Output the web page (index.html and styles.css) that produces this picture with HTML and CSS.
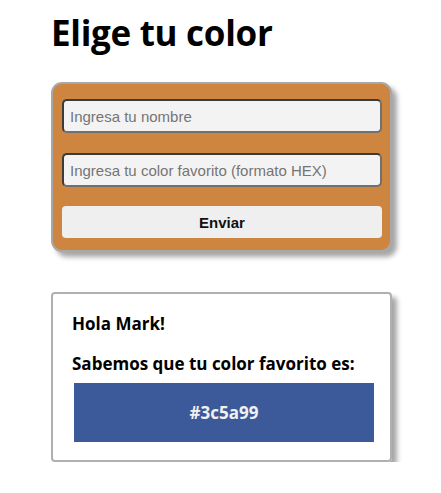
FILE: index.html
```html
<!DOCTYPE html>
<html lang="es">
<head>
<meta charset="utf-8">
<title>Elige tu color</title>
<link rel="stylesheet" href="styles.css">
</head>
<body>
<main class="page">
  <h1 class="title">Elige tu color</h1>
  <form class="form-card">
    <input class="field" type="text" placeholder="Ingresa tu nombre">
    <input class="field" type="text" placeholder="Ingresa tu color favorito (formato HEX)">
    <button class="submit" type="button">Enviar</button>
  </form>
  <section class="result-card">
    <p class="line">Hola Mark!</p>
    <p class="line">Sabemos que tu color favorito es:</p>
    <div class="swatch" style="background-color:#3c5a99">#3c5a99</div>
  </section>
</main>
</body>
</html>
```
FILE: styles.css
```css
html, body {
  margin: 0;
  padding: 0;
  background: #ffffff;
}
body {
  font-family: "Open Sans", "Noto Sans", "DejaVu Sans", sans-serif;
  color: #000;
}
.page {
  width: 341px;
  margin: 0 0 0 51px;
  padding-top: 11px;
  display: flex;
  flex-direction: column;
}
.title {
  font-size: 35px;
  font-weight: 700;
  margin: 0 0 27px 0;
  line-height: 44px;
  letter-spacing: -0.3px;
}
.form-card {
  box-sizing: border-box;
  background: #cd853f;
  border: 2px solid #a8a8a8;
  border-radius: 11px;
  box-shadow: 5px 5px 5px rgba(0, 0, 0, 0.35);
  padding: 15px 8px 12px 9px;
  display: flex;
  flex-direction: column;
  gap: 20px;
}
.field {
  box-sizing: border-box;
  height: 34px;
  width: 100%;
  margin: 0;
  border: 2px solid #3b3b3b;
  border-right-color: #707070;
  border-bottom-color: #707070;
  border-radius: 5px;
  background: #f3f3f3;
  font-family: "Liberation Sans", Arial, sans-serif;
  font-size: 15px;
  padding: 0 6px;
  color: #000;
}
.field::placeholder {
  color: #757575;
}
.submit {
  box-sizing: border-box;
  height: 32px;
  margin-top: -1px;
  width: 100%;
  border: none;
  border-radius: 4px;
  background: #efefef;
  font-family: "Liberation Sans", Arial, sans-serif;
  font-size: 15px;
  font-weight: 700;
  color: #111;
}
.result-card {
  box-sizing: border-box;
  margin-top: 40px;
  border: 2px solid #b0b0b0;
  border-radius: 4px;
  box-shadow: 5px 5px 5px rgba(0, 0, 0, 0.35);
  padding: 19px 18px 18px 19px;
  display: flex;
  flex-direction: column;
}
.line {
  margin: 0 0 18px 0;
  font-size: 17px;
  font-weight: 700;
  line-height: 22px;
}
.line:last-of-type {
  margin-bottom: 8px;
}
.swatch {
  margin-left: 2px;
  width: 300px;
  height: 59px;
  display: flex;
  align-items: center;
  justify-content: center;
  color: #f0f0f0;
  font-size: 17px;
  font-weight: 700;
}
```
